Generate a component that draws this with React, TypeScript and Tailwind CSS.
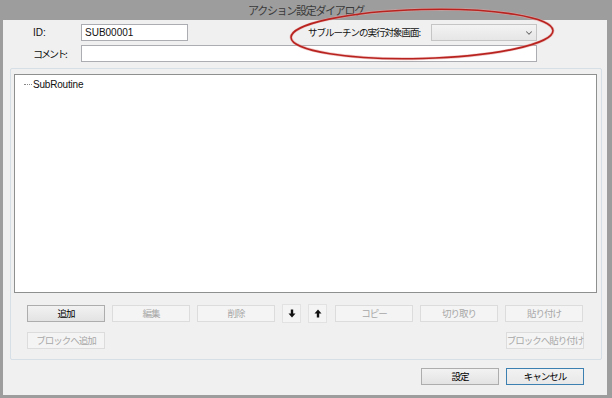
import { ChevronDown } from "lucide-react";

const font = { fontFamily: '"Noto Sans CJK JP", "Noto Sans", sans-serif' };

function Btn(props: { label: string; enabled?: boolean; primary?: boolean }) {
    const { label, enabled, primary } = props
    let cls = "border-[#dcdcdc] bg-[#f4f4f4] text-[#a8a8a8]"
    if (enabled) cls = "border-[#adadad] bg-gradient-to-b from-[#f2f2f2] to-[#e3e3e3] text-black"
    if (primary) cls = "border-[#3c7fb1] bg-gradient-to-b from-[#f2f2f2] to-[#e8e8e8] text-black"
    return (
        <div className={`w-[78px] h-[17px] border flex items-center justify-center whitespace-nowrap text-[9.5px] tracking-[-1px] leading-none ${cls}`}>
            {label}
        </div>
    )
}

function ArrowBtn(props: { up?: boolean }) {
    return (
        <div className="w-[19px] h-[19px] -mt-[1px] border border-[#e2e2e2] bg-[#f4f4f4] flex items-center justify-center">
            <svg width="8" height="9" viewBox="0 0 8 9">
                {props.up ? (
                    <path d="M4 0.5 L7.5 4.5 H5.2 V8.5 H2.8 V4.5 H0.5 Z" fill="#111" />
                ) : (
                    <path d="M4 8.5 L7.5 4.5 H5.2 V0.5 H2.8 V4.5 H0.5 Z" fill="#111" />
                )}
            </svg>
        </div>
    )
}

export default function App() {
    return (
        <div className="relative w-[612px] h-[398px] bg-[#9d9d9d] flex flex-col overflow-hidden" style={font}>
            <div className="h-[20px] flex items-center justify-center text-[11px] tracking-[-1.3px] text-[#3a3a3a] whitespace-nowrap">
                アクション設定ダイアログ
            </div>
            <div className="flex-1 ml-[3px] mr-[5px] mb-[3px] bg-[#f0f0f0] flex flex-col text-[10px] text-[#111]">
                {/* header rows */}
                <div className="flex items-center mt-[4px] pl-[30px] h-[17px] whitespace-nowrap">
                    <div className="w-[48px]" style={{ fontFamily: '"Liberation Sans", sans-serif' }}>ID:</div>
                    <div className="w-[107px] h-[17px] border border-[#abadb3] bg-white flex items-center pl-[3px]" style={{ fontFamily: '"Liberation Sans", sans-serif' }}>
                        SUB00001
                    </div>
                    <div className="w-[120px]" />
                    <div className="w-[123px] text-[9.5px] tracking-[-1px]">サブルーチンの実行対象画面:</div>
                    <div className="w-[106px] h-[17px] border border-[#c5c5c5] bg-gradient-to-b from-[#f3f3f3] to-[#e6e6e6] flex items-center justify-end pr-[2px]">
                        <ChevronDown size={10} strokeWidth={2.5} color="#666" />
                    </div>
                </div>
                <div className="flex items-center mt-[4px] pl-[30px] h-[17px] whitespace-nowrap">
                    <div className="w-[48px] tracking-[-2px]">コメント:</div>
                    <div className="w-[456px] h-[17px] border border-[#abadb3] bg-white" />
                </div>

                {/* group box */}
                <div className="ml-[7px] mt-[6px] w-[592px] h-[292px] border border-[#d5dfe5] rounded-[2px] flex flex-col">
                    <div className="ml-[3px] mt-[5px] w-[583px] h-[219px] border border-[#8e8f8f] bg-white">
                        <div className="flex items-center mt-[2px] ml-[9px]" style={{ fontFamily: '"Liberation Sans", sans-serif' }}>
                            <div className="w-[8px] border-t border-dotted border-[#888] mr-[1px]" />
                            <span className="text-[10px] tracking-[-0.2px]">SubRoutine</span>
                        </div>
                    </div>
                    <div className="flex mt-[12px] ml-[16px]">
                        <Btn label="追加" enabled />
                        <div className="w-[7px]" />
                        <Btn label="編集" />
                        <div className="w-[7px]" />
                        <Btn label="削除" />
                        <div className="w-[7px]" />
                        <ArrowBtn />
                        <div className="w-[7px]" />
                        <ArrowBtn up />
                        <div className="w-[8px]" />
                        <Btn label="コピー" />
                        <div className="w-[7px]" />
                        <Btn label="切り取り" />
                        <div className="w-[7px]" />
                        <Btn label="貼り付け" />
                    </div>
                    <div className="flex justify-between mt-[9px] ml-[16px] w-[557px]">
                        <Btn label="ブロックへ追加" />
                        <Btn label="ブロックへ貼り付け" />
                    </div>
                </div>

                {/* footer */}
                <div className="flex mt-[8px] ml-[418px]">
                    <Btn label="設定" enabled />
                    <div className="w-[7px]" />
                    <Btn label="キャンセル" primary />
                </div>
            </div>

            {/* red highlight ellipse */}
            <svg className="absolute left-[288px] top-[5px] pointer-events-none" width="270" height="58" viewBox="0 0 270 58">
                <ellipse cx="134" cy="29" rx="131" ry="24.5" fill="none" stroke="#e8a0a0" strokeWidth="3" opacity="0.6" transform="rotate(-1.5 134 29)" />
                <ellipse cx="134" cy="29" rx="131" ry="24.5" fill="none" stroke="#b8231f" strokeWidth="1.6" transform="rotate(-1.5 134 29)" />
            </svg>
        </div>
    )
}
